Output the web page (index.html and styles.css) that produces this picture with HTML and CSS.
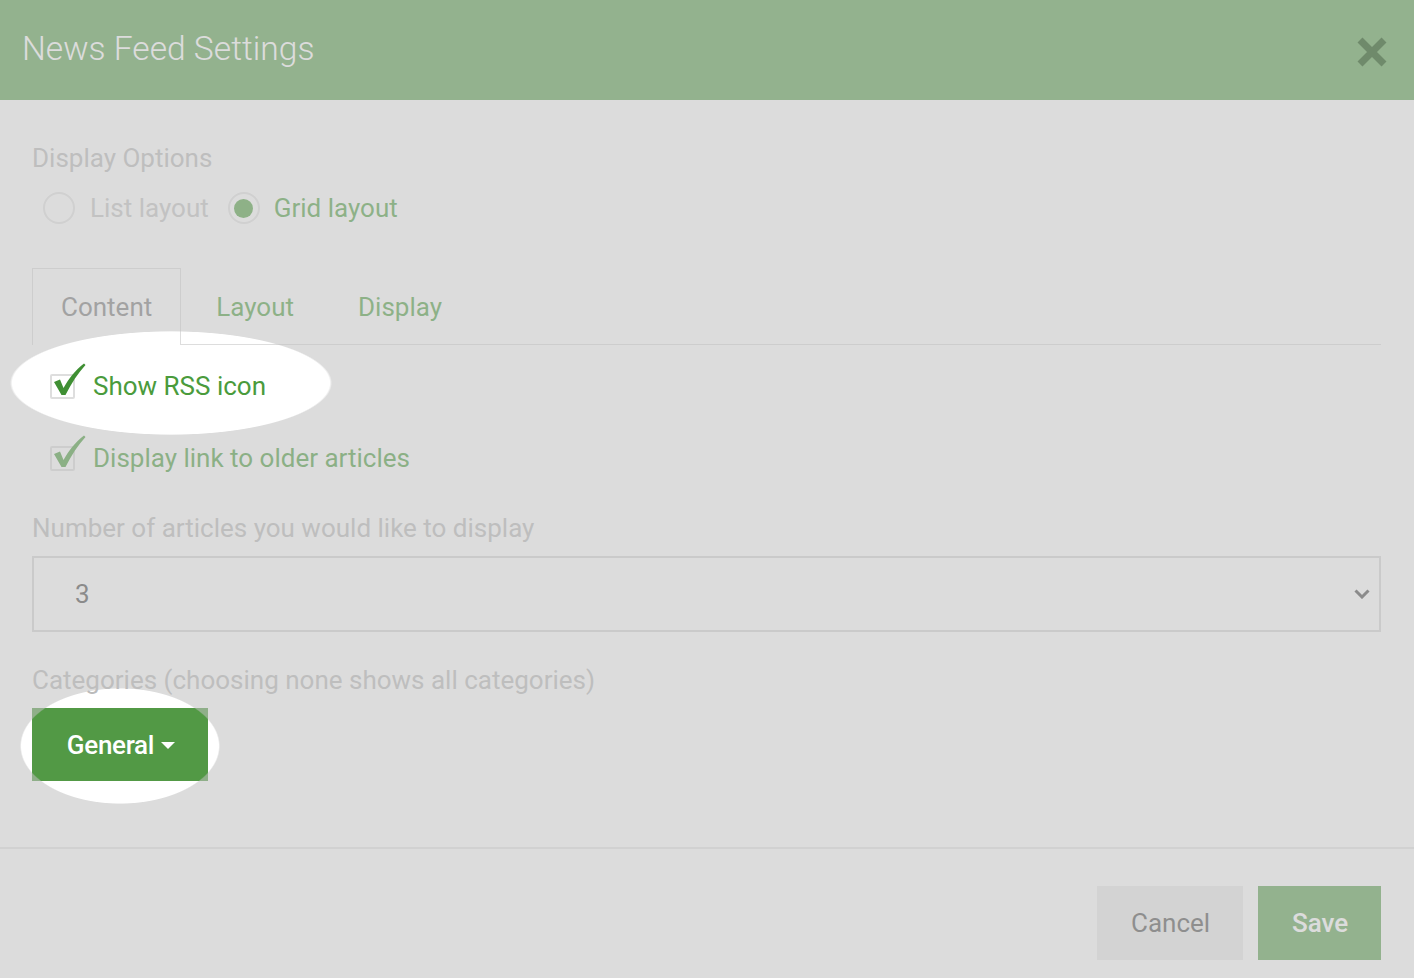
FILE: index.html
```html
<!DOCTYPE html>
<html lang="en">
<head>
<meta charset="utf-8">
<title>News Feed Settings</title>
<link rel="stylesheet" href="styles.css">
</head>
<body>
<div class="modal">
  <header class="modal-header">
    <h1 class="modal-title">News Feed Settings</h1>
    <button class="close" type="button" aria-label="Close">
      <svg width="32" height="32" viewBox="0 0 32 32"><path d="M4 4 L28 28 M28 4 L4 28" stroke="currentColor" stroke-width="7" stroke-linecap="butt"/></svg>
    </button>
  </header>

  <div class="modal-body">
    <div class="field-label">Display Options</div>
    <div class="radio-row">
      <label class="radio"><span class="radio-circle"></span><span class="radio-text">List layout</span></label>
      <label class="radio checked"><span class="radio-circle"><span class="radio-dot"></span></span><span class="radio-text">Grid layout</span></label>
    </div>

    <ul class="tabs">
      <li class="tab active">Content</li>
      <li class="tab">Layout</li>
      <li class="tab">Display</li>
    </ul>

    <div class="check-row first">
      <span class="checkbox">
        <svg class="tick" width="36" height="34" viewBox="0 0 36 34"><path d="M3 19 L9 16.5 L12.5 25 C17.5 16 24.5 7 33 0.5 L34.5 2 C27 10 20.5 20 14.5 32 L10.5 32 Z" fill="currentColor"/></svg>
      </span>
      <span class="check-text">Show RSS icon</span>
    </div>
    <div class="check-row second">
      <span class="checkbox">
        <svg class="tick" width="36" height="34" viewBox="0 0 36 34"><path d="M3 19 L9 16.5 L12.5 25 C17.5 16 24.5 7 33 0.5 L34.5 2 C27 10 20.5 20 14.5 32 L10.5 32 Z" fill="currentColor"/></svg>
      </span>
      <span class="check-text">Display link to older articles</span>
    </div>

    <div class="field-label number-label">Number of articles you would like to display</div>
    <div class="select">
      <span class="select-value">3</span>
      <svg class="chevron" width="16" height="10" viewBox="0 0 16 10"><path d="M1.5 1.5 L8 8 L14.5 1.5" fill="none" stroke="currentColor" stroke-width="3"/></svg>
    </div>

    <div class="field-label cat-label">Categories (choosing none shows all categories)</div>
    <button class="btn-general" type="button">General<span class="caret"></span></button>
  </div>

  <footer class="modal-footer">
    <button class="btn btn-cancel" type="button">Cancel</button>
    <button class="btn btn-save" type="button">Save</button>
  </footer>
</div>
<div class="dim"></div>
</body>
</html>
```

FILE: styles.css
```css
html, body {
  margin: 0;
  padding: 0;
  width: 1414px;
  height: 978px;
  overflow: hidden;
  background: #ffffff;
  font-family: Roboto, "Liberation Sans", Arial, sans-serif;
}

.modal {
  width: 1414px;
  height: 978px;
  background: #ffffff;
  display: flex;
  flex-direction: column;
}

.modal-header {
  height: 100px;
  box-sizing: border-box;
  background: #5ba050;
  display: flex;
  align-items: center;
  justify-content: space-between;
  padding: 0 26px 3px 22px;
}

.modal-title {
  margin: 0;
  font-size: 33.6px;
  font-weight: 300;
  color: #ffffff;
  line-height: 40px;
}

.close {
  border: 0;
  background: none;
  padding: 0;
  margin-top: 7px;
  color: #0a4601;
  width: 32px;
  height: 32px;
  display: flex;
}

.modal-body {
  padding: 43px 33px 66px 32px;
  border-bottom: 2px solid #e6e6e6;
}

.field-label {
  font-size: 26px;
  line-height: 30px;
  color: #bbbbbb;
}

.radio-row {
  display: flex;
  align-items: center;
  height: 34px;
  margin-top: 18px;
  padding-left: 11px;
  gap: 19px;
}

.radio {
  display: flex;
  align-items: center;
  gap: 15px;
}

.radio-circle {
  width: 32px;
  height: 32px;
  box-sizing: border-box;
  border: 2px solid #e4e4e4;
  border-radius: 50%;
  background: #ffffff;
  display: flex;
  align-items: center;
  justify-content: center;
}

.radio-dot {
  width: 19px;
  height: 19px;
  border-radius: 50%;
  background: #4f9f40;
}

.radio-text {
  font-size: 26px;
  line-height: 30px;
  color: #c4c4c4;
}

.radio.checked .radio-text {
  color: #4e9f3f;
  margin-left: -1px;
}

.tabs {
  list-style: none;
  margin: 43px 0 0 0;
  padding: 0;
  display: flex;
  border-bottom: 1px solid #dddddd;
  height: 76px;
}

.tab {
  box-sizing: border-box;
  height: 77px;
  padding: 0 28px;
  margin-right: 6px;
  border: 1px solid transparent;
  border-bottom: 0;
  font-size: 26px;
  line-height: 30px;
  display: flex;
  align-items: center;
  color: #4e9f3f;
}

.tab.active {
  border-color: #dddddd;
  background: #ffffff;
  color: #7d7d7d;
}

.check-row {
  display: flex;
  align-items: center;
  height: 40px;
  padding-left: 18px;
}

.check-row.first { margin-top: 21px; }
.check-row.second { margin-top: 32px; }

.checkbox {
  position: relative;
  width: 25px;
  height: 25px;
  box-sizing: border-box;
  border: 2px solid #dedede;
  border-radius: 2px;
  background: #ffffff;
  flex: none;
}

.tick {
  position: absolute;
  left: -1px;
  top: -13px;
  color: #3f8f33;
}

.check-text {
  margin-left: 18px;
  font-size: 26px;
  line-height: 30px;
  color: #4a9b3c;
}

.check-row.second .tick { color: #4a9b3c; }

.number-label { margin-top: 35px; }

.select {
  margin-top: 13px;
  height: 76px;
  box-sizing: border-box;
  border: 2px solid #d6d6d6;
  display: flex;
  align-items: center;
  justify-content: space-between;
  padding: 0 9px 0 41px;
}

.select-value {
  font-size: 26px;
  line-height: 30px;
  color: #494949;
}

.chevron {
  color: #494949;
}

.cat-label { margin-top: 33px; }

.btn-general {
  margin-top: 13px;
  height: 73px;
  width: 176px;
  border: 0;
  background: #529945;
  color: #ffffff;
  font-family: Roboto, "Liberation Sans", Arial, sans-serif;
  font-size: 26px;
  font-weight: 500;
  letter-spacing: -0.3px;
  display: flex;
  align-items: center;
  justify-content: center;
  padding: 0 0 0 2px;
}

.caret {
  width: 0;
  height: 0;
  border-left: 7px solid transparent;
  border-right: 7px solid transparent;
  border-top: 7px solid #ffffff;
  margin-left: 7px;
  margin-top: 2px;
}

.modal-footer {
  display: flex;
  justify-content: flex-end;
  gap: 15px;
  padding: 37px 33px 0 0;
}

.btn {
  height: 74px;
  border: 0;
  padding: 0 34px;
  font-family: Roboto, "Liberation Sans", Arial, sans-serif;
  font-size: 26px;
}

.btn-cancel {
  width: 146px;
  background: #ebebeb;
  color: #505050;
}

.btn-save {
  width: 123px;
  background: #5ba050;
  color: #ffffff;
  font-weight: 500;
}

.dim {
  position: fixed;
  left: 0;
  top: 0;
  width: 1414px;
  height: 978px;
  background: rgba(192, 192, 192, 0.555);
  pointer-events: none;
  -webkit-mask-image:
    radial-gradient(ellipse 161px 52px at 171px 383px, transparent 98.5%, #000 100%),
    radial-gradient(ellipse 100px 58px at 120px 746px, transparent 98.5%, #000 100%);
  -webkit-mask-composite: source-in;
  mask-image:
    radial-gradient(ellipse 161px 52px at 171px 383px, transparent 98.5%, #000 100%),
    radial-gradient(ellipse 100px 58px at 120px 746px, transparent 98.5%, #000 100%);
  mask-composite: intersect;
}
```
